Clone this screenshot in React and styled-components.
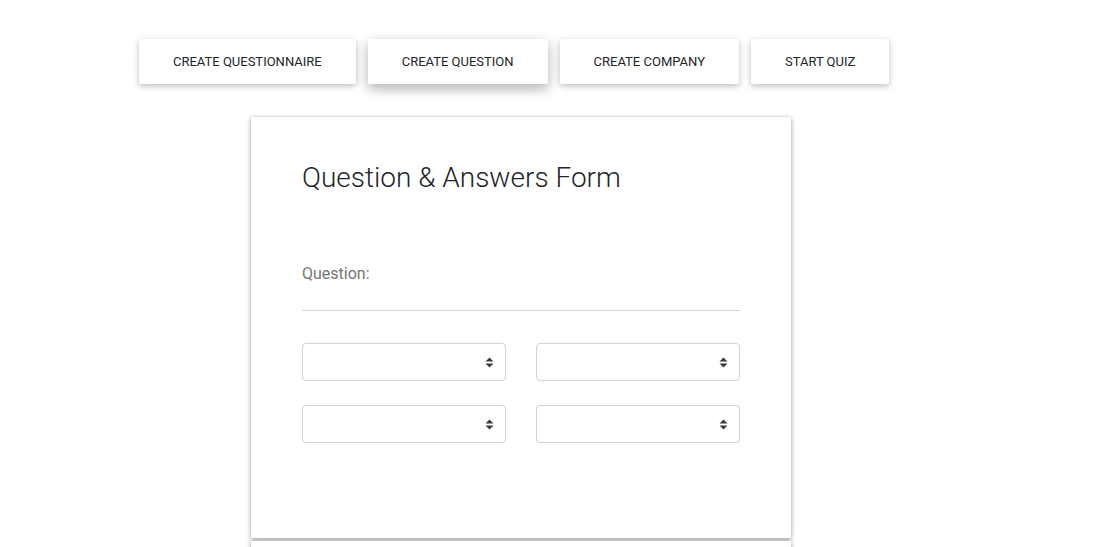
import React from "react";
import styled, { createGlobalStyle } from "styled-components";

const Global = createGlobalStyle`
  html, body { margin: 0; padding: 0; background: #fff; }
  body { font-family: Roboto, "Liberation Sans", sans-serif; color: #212529; }
`;

const Page = styled.div`
  padding: 39px 0 0 139px;
`;

const Nav = styled.nav`
  display: flex;
  gap: 12px;
`;

const NavButton = styled.button`
  height: 45px;
  padding: 0 34px;
  border: none;
  border-radius: 2px;
  background: #fff;
  font-family: Roboto, "Liberation Sans", sans-serif;
  font-size: 13px;
  font-weight: 400;
  color: #212529;
  text-transform: uppercase;
  cursor: pointer;
  box-shadow: ${(p) =>
    p.$raised
      ? "0 5px 11px 0 rgba(0,0,0,0.18), 0 4px 15px 0 rgba(0,0,0,0.15)"
      : "0 2px 5px 0 rgba(0,0,0,0.16), 0 2px 10px 0 rgba(0,0,0,0.12)"};
`;

const Card = styled.section`
  width: 540px;
  box-sizing: border-box;
  margin: ${(p) => (p.$first ? "33px" : "3px")} 0 0 112px;
  padding: ${(p) => (p.$first ? "44px 51px 95px" : "40px 51px")};
  background: #fff;
  box-shadow: 0 2px 5px 0 rgba(0,0,0,0.26), 0 0 4px 0 rgba(0,0,0,0.18);
`;

const Title = styled.h1`
  margin: 0;
  font-size: 28px;
  font-weight: 300;
  line-height: 34px;
  color: #212529;
`;

const Field = styled.div`
  margin-top: 69px;
  border-bottom: 1px solid #ced4da;
  padding-bottom: 26px;
`;

const Label = styled.label`
  display: block;
  font-size: 16px;
  line-height: 20px;
  color: #757575;
`;

const Grid = styled.div`
  margin-top: 32px;
  display: grid;
  grid-template-columns: 204px 204px;
  column-gap: 30px;
  row-gap: 24px;
`;

const SelectBox = styled.div`
  height: 38px;
  box-sizing: border-box;
  border: 1px solid #ced4da;
  border-radius: 4px;
  display: flex;
  align-items: center;
  justify-content: flex-end;
  padding-right: 11px;
  background: #fff;
`;

const Arrows = () => (
  <svg width="9" height="11" viewBox="0 0 9 11">
    <path d="M4.5 0.5 L8.5 4.5 L0.5 4.5 Z" fill="#343a40" />
    <path d="M4.5 10.5 L8.5 6.5 L0.5 6.5 Z" fill="#343a40" />
  </svg>
);

export default function App() {
  return (
    <>
      <Global />
      <Page>
        <Nav>
          <NavButton>Create Questionnaire</NavButton>
          <NavButton $raised>Create Question</NavButton>
          <NavButton>Create Company</NavButton>
          <NavButton>Start Quiz</NavButton>
        </Nav>
        <Card $first>
          <Title>Question &amp; Answers Form</Title>
          <Field>
            <Label>Question:</Label>
          </Field>
          <Grid>
            {[0, 1, 2, 3].map((i) => (
              <SelectBox key={i}>
                <Arrows />
              </SelectBox>
            ))}
          </Grid>
        </Card>
        <Card>
          <Title as="h2">&nbsp;</Title>
        </Card>
      </Page>
    </>
  );
}
